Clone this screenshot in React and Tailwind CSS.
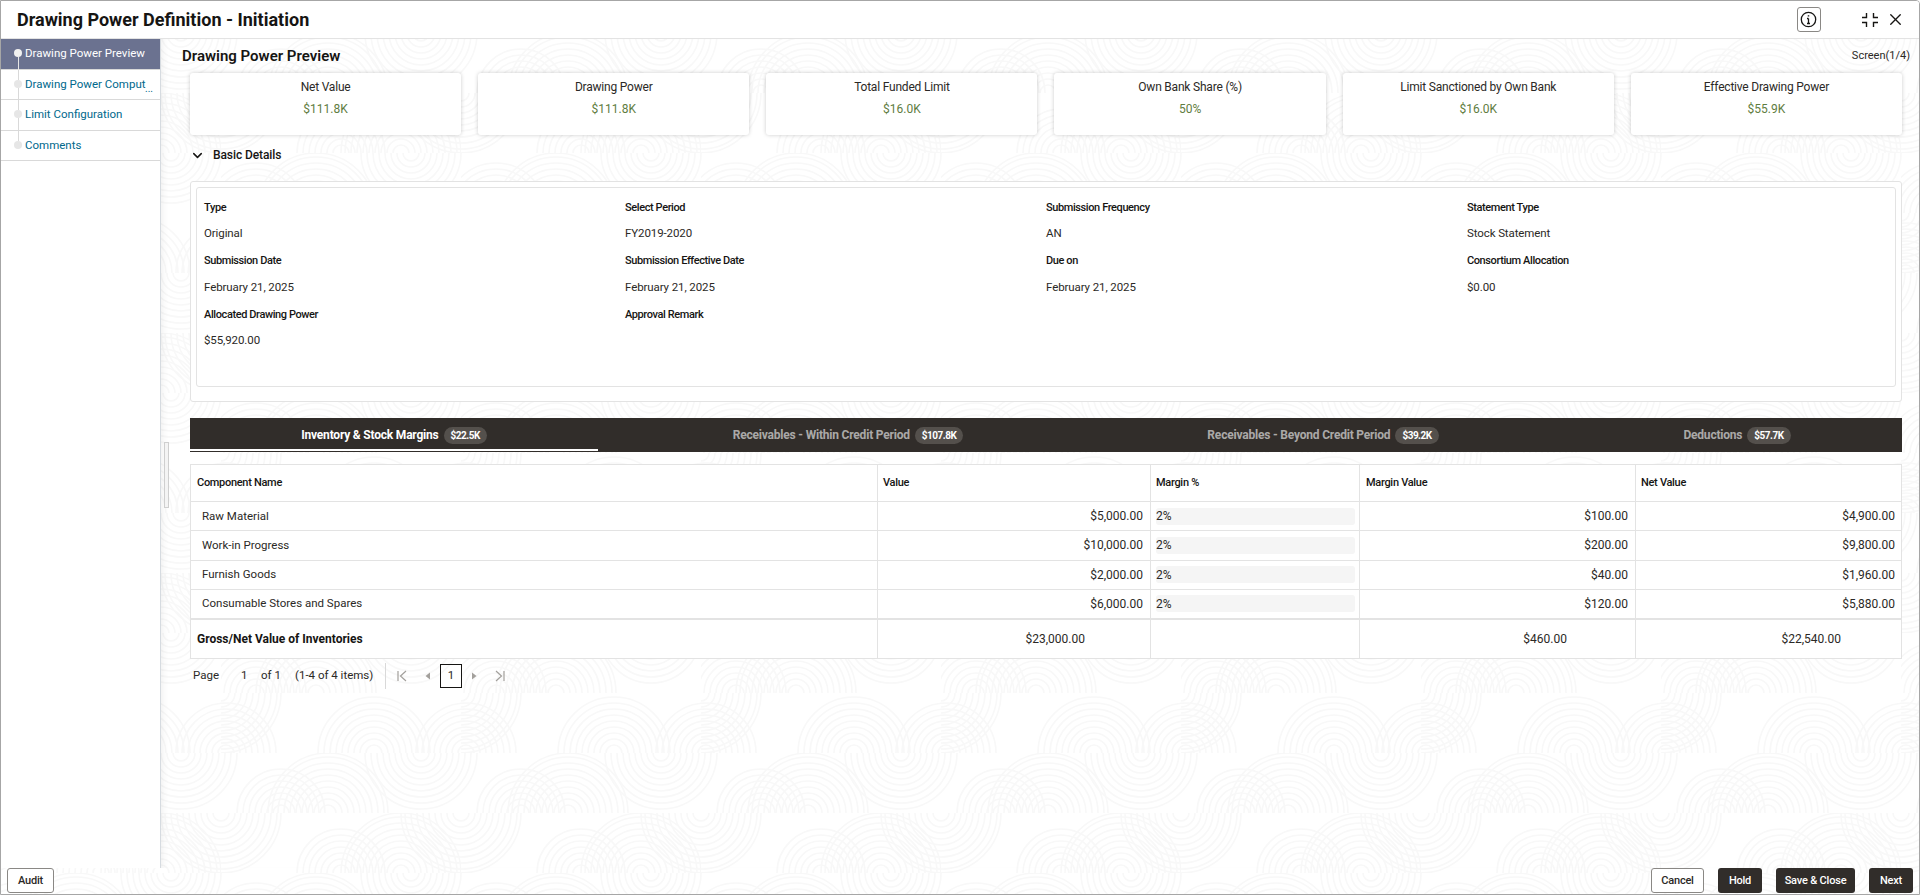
import React from 'react';
import { X, ChevronDown } from 'lucide-react';

const cards = [
  ['Net Value', '$111.8K'],
  ['Drawing Power', '$111.8K'],
  ['Total Funded Limit', '$16.0K'],
  ['Own Bank Share (%)', '50%'],
  ['Limit Sanctioned by Own Bank', '$16.0K'],
  ['Effective Drawing Power', '$55.9K'],
];

const fields = [
  ['Type', 'Original'],
  ['Select Period', 'FY2019-2020'],
  ['Submission Frequency', 'AN'],
  ['Statement Type', 'Stock Statement'],
  ['Submission Date', 'February 21, 2025'],
  ['Submission Effective Date', 'February 21, 2025'],
  ['Due on', 'February 21, 2025'],
  ['Consortium Allocation', '$0.00'],
  ['Allocated Drawing Power', '$55,920.00'],
  ['Approval Remark', ''],
];

const rows = [
  ['Raw Material', '$5,000.00', '$100.00', '$4,900.00'],
  ['Work-in Progress', '$10,000.00', '$200.00', '$9,800.00'],
  ['Furnish Goods', '$2,000.00', '$40.00', '$1,960.00'],
  ['Consumable Stores and Spares', '$6,000.00', '$120.00', '$5,880.00'],
];

const steps = ['Drawing Power Preview', 'Drawing Power Comput', 'Limit Configuration', 'Comments'];

// faint arcs behind the page, one band of the tile per row
const bands = [
  { y: 0, arcs: [[0, 0, 60], [153, 60, 56], [245, 60, 50], [5, 60, 50]] },
  { y: 60, arcs: [[107, 120, 60], [60, 120, 48], [200, 60, 58], [-40, 60, 58]] },
  { y: 120, arcs: [[0, 120, 60], [240, 120, 60], [180, 180, 60], [120, 180, 46]] },
  { y: 180, arcs: [[95, 240, 60], [35, 240, 50], [190, 180, 55], [-50, 180, 55]] },
];

function PatternLayer() {
  const radii = [8, 14, 20, 26, 32, 38, 44, 50, 56, 60];
  return (
    <svg className="absolute inset-0 w-full h-full pointer-events-none" xmlns="http://www.w3.org/2000/svg">
      <defs>
        {bands.map((b) => (
          <clipPath id={`band${b.y}`} key={b.y}>
            <rect x="0" y={b.y} width="240" height="60" />
          </clipPath>
        ))}
        <pattern id="arcs" x="700" y="692" width="240" height="240" patternUnits="userSpaceOnUse">
          {bands.map((b) => (
            <g key={b.y} clipPath={`url(#band${b.y})`} fill="none" stroke="#f8f8f8" strokeWidth="1.6">
              {b.arcs.map(([cx, cy, max]) =>
                radii.filter((r) => r <= max).map((r) => <circle key={`${cx}-${cy}-${r}`} cx={cx} cy={cy} r={r} />)
              )}
            </g>
          ))}
        </pattern>
      </defs>
      <rect width="100%" height="100%" fill="url(#arcs)" />
    </svg>
  );
}

function SummaryCard({ title, value }) {
  return (
    <div className="bg-white rounded-[3px] shadow-[0_0_4px_rgba(0,0,0,0.2)] h-[62px] flex flex-col items-center pt-[4px]">
      <div className="text-[12px] leading-[20px] tracking-[-0.2px] text-[#2b2926]">{title}</div>
      <div className="text-[12px] leading-[20px] mt-[2px] text-[#5f7d3f]">{value}</div>
    </div>
  );
}

function Field({ label, value }) {
  return (
    <div>
      <div className="h-[26px] pt-[2px] flex items-center text-[11px] font-medium tracking-[-0.4px] text-[#161513]">{label}</div>
      <div className="h-[27.5px] flex items-center text-[11.5px] tracking-[-0.1px] text-[#2b2926]">{value}</div>
    </div>
  );
}

function TabLabel({ label, amount, active, className }) {
  return (
    <div className={`h-full pt-[3px] flex items-center justify-center gap-[5px] border-b-[2px] ${active ? 'border-white text-white' : 'border-transparent text-white/60'} ${className}`}>
      <span className="text-[12px] font-bold tracking-[-0.2px]">{label}</span>
      <span className="h-[17px] px-[7px] rounded-full bg-[#54504c] text-white text-[10px] font-bold tracking-[-0.5px] flex items-center">{amount}</span>
    </div>
  );
}

const gridCols = 'grid grid-cols-[687px_273px_209px_276px_1fr]';

function TableRow({ name, value, margin, net }) {
  return (
    <div className={`${gridCols} h-[29.25px] border-b border-[#e3e3e3] text-[12px] text-[#2b2926]`}>
      <div className="flex items-center pl-[11px] border-r border-[#e3e3e3] text-[11.5px]">{name}</div>
      <div className="flex items-center justify-end pr-[7px] border-r border-[#e3e3e3]">{value}</div>
      <div className="flex items-center pl-[5px] pr-[4px] border-r border-[#e3e3e3]">
        <div className="w-full h-[17px] bg-[#f5f5f5] rounded-[3px] flex items-center">2%</div>
      </div>
      <div className="flex items-center justify-end pr-[7px] border-r border-[#e3e3e3]">{margin}</div>
      <div className="flex items-center justify-end pr-[6px]">{net}</div>
    </div>
  );
}

function PagerIcon({ type }) {
  const paths = {
    first: <path d="M2 1v10M10 1L4.5 6l5.5 5" fill="none" stroke="#a3a09c" strokeWidth="1.2" />,
    prev: <path d="M8 2.5v7L3.5 6z" fill="#a3a09c" />,
    next: <path d="M4 2.5v7L8.5 6z" fill="#a3a09c" />,
    last: <path d="M10 1v10M2 1l5.5 5L2 11" fill="none" stroke="#a3a09c" strokeWidth="1.2" />,
  };
  return <svg className="block" width="12" height="12" viewBox="0 0 12 12">{paths[type]}</svg>;
}

export default function App() {
  return (
    <div className="relative h-screen w-full overflow-hidden bg-white border border-[#a6a6a6] rounded-tr-[4px] flex flex-col font-['Roboto',sans-serif] text-[#161513]">
      <PatternLayer />

      {/* Header */}
      <div className="relative h-[38px] shrink-0 bg-white border-b border-[#e3e3e3] flex items-center pl-[16px] pr-[14.5px]">
        <h1 className="text-[18px] font-bold text-[#161513]">Drawing Power Definition - Initiation</h1>
        <div className="ml-auto flex items-center">
          <button className="w-[24px] h-[25px] border border-[#8a8885] rounded-[3px] flex items-center justify-center">
            <svg width="17" height="17" viewBox="0 0 17 17" fill="none" stroke="#161513" strokeWidth="1.3">
              <circle cx="8.5" cy="8.5" r="7.2" />
              <path d="M8.5 7.5v5M7 7.5h1.5M7 12.5h3" />
              <path d="M8.5 4.2v1.4" strokeWidth="1.5" />
            </svg>
          </button>
          <svg className="ml-[40px]" width="18" height="16" viewBox="0 0 18 16" fill="none" stroke="#161513" strokeWidth="1.4">
            <path d="M1 5.5h4.5V1M12.5 1v4.5H17M1 10.5h4.5V15M12.5 15v-4.5H17" />
          </svg>
          <X className="ml-[7px]" size={19} strokeWidth={1.7} color="#161513" />
        </div>
      </div>

      <div className="relative flex flex-1 min-h-0">
        {/* Sidebar */}
        <div className="w-[160px] shrink-0 bg-white border-r border-[#d6dbe0]">
          {steps.map((step, i) => (
            <div key={step} className={`relative h-[30.5px] flex items-center pl-[24px] border-b border-[#d9d9d9] text-[11.5px] ${i === 0 ? 'bg-[#6b7290] text-white' : 'text-[#00688c]'}`}>
              <span className={`absolute left-[13px] top-[10px] w-[8px] h-[8px] rounded-full ${i === 0 ? 'bg-[#f0f0f0]' : 'bg-[#e6e6e6]'}`} />
              {i < 3 && <span className={`absolute left-[17px] top-[18px] w-px h-[13px] ${i === 0 ? 'bg-[#e6e6e6]' : 'bg-[#d9d9d9]'}`} />}
              {i > 0 && <span className="absolute left-[17px] top-0 w-px h-[10px] bg-[#d9d9d9]" />}
              <span className="whitespace-nowrap">{step}</span>
              {i === 1 && <span className="absolute left-[144px] top-[12px] text-[10px] leading-[14px] text-[#00688c]">...</span>}
            </div>
          ))}
        </div>

        {/* Main */}
        <div className="relative flex-1 min-w-0 pl-[21px] pr-[9px] shadow-[inset_6px_0_6px_-4px_rgba(0,0,0,0.06)]">
          <div className="absolute left-[3px] top-[403px] w-[5px] h-[66px] border border-[#cfcfcf] bg-[#f4f4f4]" />

          <div className="h-[34px] flex items-center justify-between">
            <h2 className="text-[15px] font-semibold text-[#161513]">Drawing Power Preview</h2>
            <span className="text-[11px] text-[#2b2926]">Screen(1/4)</span>
          </div>

          <div className="mx-[8px]">
            <div className="grid grid-cols-6 gap-[17px]">
              {cards.map(([title, value]) => (
                <SummaryCard key={title} title={title} value={value} />
              ))}
            </div>

            <div className="h-[46px] pb-[6px] flex items-center">
              <ChevronDown size={15} strokeWidth={2.4} color="#161513" />
              <span className="ml-[8px] text-[12px] font-medium tracking-[-0.1px] text-[#161513]">Basic Details</span>
            </div>

            <div className="bg-white border border-[#e3e3e3] rounded-[3px] pt-[5px] pb-[14px] px-[5px]">
              <div className="h-[200px] border border-[#e3e3e3] rounded-[3px] pl-[7px] pt-[6px] grid grid-cols-[repeat(4,421px)] content-start">
                {fields.map(([label, value]) => (
                  <Field key={label} label={label} value={value} />
                ))}
              </div>
            </div>

            {/* Tabs */}
            <div className="mt-[16px] h-[34px] pb-px bg-[#312d2a] flex">
              <TabLabel className="w-[408px]" label="Inventory & Stock Margins" amount="$22.5K" active />
              <TabLabel className="w-[500px]" label="Receivables - Within Credit Period" amount="$107.8K" />
              <TabLabel className="w-[450px]" label="Receivables - Beyond Credit Period" amount="$39.2K" />
              <TabLabel className="flex-1 pl-[24px]" label="Deductions" amount="$57.7K" />
            </div>

            {/* Table */}
            <div className="mt-[12px] bg-white border border-[#e3e3e3] border-t-[#e3e3e3]">
              <div className={`${gridCols} h-[37px] border-b border-[#e3e3e3] text-[11px] font-medium tracking-[-0.3px] text-[#161513]`}>
                <div className="flex items-center pl-[6px] border-r border-[#e3e3e3]">Component Name</div>
                <div className="flex items-center pl-[5px] border-r border-[#e3e3e3]">Value</div>
                <div className="flex items-center pl-[5px] border-r border-[#e3e3e3]">Margin %</div>
                <div className="flex items-center pl-[6px] border-r border-[#e3e3e3]">Margin Value</div>
                <div className="flex items-center pl-[5px]">Net Value</div>
              </div>
              {rows.map(([name, value, margin, net]) => (
                <TableRow key={name} name={name} value={value} margin={margin} net={net} />
              ))}
              <div className={`${gridCols} h-[40px] border-t-[2px] border-[#e3e3e3] -mt-px text-[12px]`}>
                <div className="flex items-center pl-[6px] border-r border-[#e3e3e3] font-bold text-[#161513]">Gross/Net Value of Inventories</div>
                <div className="flex items-center justify-end pr-[65px] border-r border-[#e3e3e3] text-[#2b2926]">$23,000.00</div>
                <div className="border-r border-[#e3e3e3]" />
                <div className="flex items-center justify-end pr-[68px] border-r border-[#e3e3e3] text-[#2b2926]">$460.00</div>
                <div className="flex items-center justify-end pr-[60px] text-[#2b2926]">$22,540.00</div>
              </div>
            </div>

            {/* Pagination */}
            <div className="relative mt-[4px] h-[26px] pl-[3px] flex items-center text-[11.5px] text-[#2b2926]">
              <span className="w-[48px]">Page</span>
              <span className="w-[20px]">1</span>
              <span className="w-[34px]">of 1</span>
              <span className="w-[90px]">(1-4 of 4 items)</span>
              <span className="w-px h-[26px] bg-[#d9d9d9]" />
              <span className="ml-[10px]"><PagerIcon type="first" /></span>
              <span className="ml-[14px]"><PagerIcon type="prev" /></span>
              <span className="ml-[6px] w-[22px] h-[24px] border border-[#161513] flex items-center justify-center">1</span>
              <span className="ml-[6px]"><PagerIcon type="next" /></span>
              <span className="ml-[14px]"><PagerIcon type="last" /></span>
            </div>
          </div>
        </div>
      </div>

      {/* Footer */}
      <div className="relative h-[26px] shrink-0 flex items-start pl-[6px] pr-[6px] text-[11px] font-medium tracking-[-0.2px]">
        <button className="w-[47px] h-[25px] pt-px bg-white border border-[#8a8885] rounded-[3px] text-[#2b2926]">Audit</button>
        <div className="ml-auto flex gap-[14px]">
          <button className="w-[53px] h-[25px] pt-px bg-white border border-[#8a8885] rounded-[3px] text-[#2b2926]">Cancel</button>
          <button className="w-[44px] h-[25px] pt-px bg-[#312d2a] rounded-[3px] text-white">Hold</button>
          <button className="w-[79px] h-[25px] pt-px bg-[#312d2a] rounded-[3px] text-white">Save &amp; Close</button>
          <button className="w-[44px] h-[25px] pt-px bg-[#312d2a] rounded-[3px] text-white">Next</button>
        </div>
      </div>
    </div>
  );
}
